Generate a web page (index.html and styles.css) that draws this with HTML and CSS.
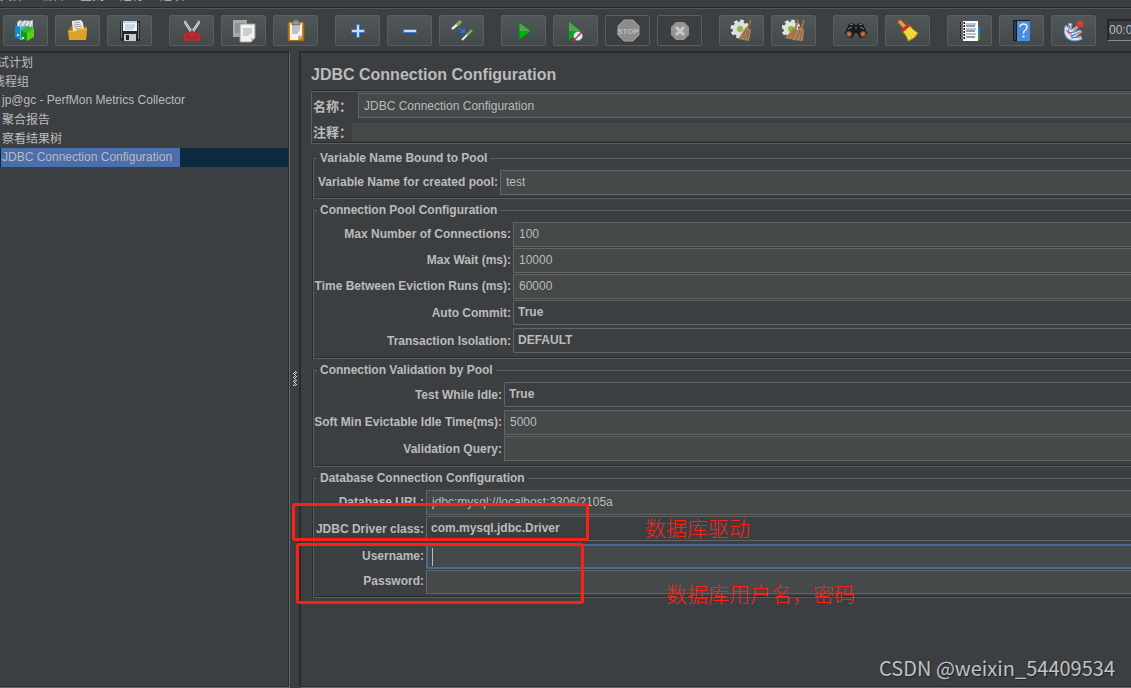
FILE: index.html
```html
<!DOCTYPE html>
<html lang="zh-CN">
<head>
<meta charset="utf-8">
<title>JDBC Connection Configuration</title>
<link rel="stylesheet" href="styles.css">
</head>
<body>
<div class="app">
  <nav class="menubar" aria-label="菜单">
    <span>文件</span><span>编辑</span><span>查找</span><span>运行</span><span>选项</span>
  </nav>

  <div class="toolbar" role="toolbar">
    <div class="group">
      <button class="tool" aria-label="模板"><svg width="24" height="24" viewBox="0 0 24 24"><path d="M3 3l3-2 3 1 3-1 3 1 4-1v9H3z" fill="#b4babd"/><path d="M6 2l-2 5M11 2l-3 5M15 2l-3 5M18 2l-2 5" stroke="#eceeef" stroke-width="1.500"/><path d="M1 6l5 2v13l-5-3z" fill="#1489d0"/><path d="M6 8l6-2v14l-6 1z" fill="#49b9f3"/><circle cx="4" cy="16" r="1" fill="#fff"/><path d="M7 11l6 3v8l-6-3z" fill="#159a1c"/><path d="M13 13l7-4 0 9-7 4z" fill="#54cf16"/><path d="M7 11l6-4 7 2-7 5z" fill="#35b523"/><circle cx="9" cy="19" r="1" fill="#fff"/></svg></button>
      <button class="tool" aria-label="打开"><svg width="24" height="24" viewBox="0 0 24 24"><path d="M3 9l2-2h14l2 1v10H3z" fill="#a96e0c"/><path d="M6 2l9-1 2 3 1 9H7z" fill="#f3f3f3"/><path d="M8 4l6-1M8 6l7-1M8 8l8-1M9 10l7-1" stroke="#989c9f"/><path d="M2 12h8l2-2h9l-1 11H3z" fill="#dca328"/><path d="M2 12h8l2-2h9" stroke="#f0c75c" fill="none"/></svg></button>
      <button class="tool" aria-label="保存"><svg width="24" height="24" viewBox="0 0 24 24"><path d="M2 2h20v20H4l-2-2z" fill="#25282c"/><path d="M3 2h1v17H3zM20 4h1v16h-1z" fill="#777c81"/><path d="M5 2h14v10H5z" fill="#f1f5f8"/><path d="M5 2h14v2H5z" fill="#bed7ea"/><path d="M7 6h10M7 8h10M7 10h8" stroke="#a4bdd1"/><path d="M6 15h12v7H6z" fill="#c9cccf"/><path d="M8 16h3v5H8z" fill="#22252a"/></svg></button>
    </div>
    <div class="group">
      <button class="tool" aria-label="剪切"><svg width="24" height="24" viewBox="0 0 24 24"><path d="M5 1l9 13-2 2L4 4zM19 1l-9 13 2 2 8-12z" fill="#dde0e1"/><path d="M5 3l8 12M19 3l-7 11" stroke="#969a9d"/><ellipse cx="7.500" cy="18" rx="3" ry="3" fill="none" stroke="#d91c20" stroke-width="2.500"/><ellipse cx="16.500" cy="18" rx="3" ry="3" fill="none" stroke="#d91c20" stroke-width="2.500"/><path d="M9 16l3-3 3 3" fill="none" stroke="#d91c20" stroke-width="3"/></svg></button>
      <button class="tool" aria-label="复制"><svg width="24" height="24" viewBox="0 0 24 24"><path d="M1 1h14v17H1z" fill="#a7aaab"/><path d="M3 5h9M3 7h9M3 9h9M3 11h9M3 13h9" stroke="#797d7f"/><path d="M8 5h15v14l-4 4H8z" fill="#f3f3f2" stroke="#999"/><path d="M11 10h9M11 12h9M11 14h9M11 16h6" stroke="#a5a7a8"/><path d="M23 19h-4v4z" fill="#bfc2c3"/></svg></button>
      <button class="tool" aria-label="粘贴"><svg width="24" height="24" viewBox="0 0 24 24"><path d="M4 3h16v19H4z" fill="#c58422" stroke="#8f5912"/><path d="M6 4h12v13l-4 4H6z" fill="#f2f2f1"/><path d="M8 8h8M8 10h8M8 12h7M8 14h6" stroke="#8d9194"/><path d="M18 16l-4 5v-4z" fill="#a9adb0"/><path d="M8 3l2-1V1h4v1l2 1v3H8z" fill="#8f9588" stroke="#64695f"/></svg></button>
    </div>
    <div class="group">
      <button class="tool" aria-label="展开"><svg width="24" height="24" viewBox="0 0 24 24"><path d="M10.500 5.500h3v5h5v3h-5v5h-3v-5h-5v-3h5z" fill="#c4def9" stroke="#3b78cf"/></svg></button>
      <button class="tool" aria-label="折叠"><svg width="24" height="24" viewBox="0 0 24 24"><path d="M5.500 10.500h13v3h-13z" fill="#c4def9" stroke="#3b78cf"/></svg></button>
      <button class="tool" aria-label="切换"><svg width="24" height="24" viewBox="0 0 24 24"><path d="M2 10l7-6" stroke="#e6e8e5" stroke-width="2.500"/><path d="M7 6l4-4" stroke="#7dab58" stroke-width="3.500"/><path d="M12 21l7-7" stroke="#e6e8e5" stroke-width="2"/><path d="M17 16l5-5" stroke="#7dab58" stroke-width="2.500"/><path d="M9 9l5 4" stroke="#2679e5" stroke-width="1.500"/><path d="M15 9v5h-5z" fill="#2679e5"/></svg></button>
    </div>
    <div class="group">
      <button class="tool" aria-label="启动"><svg width="24" height="24" viewBox="0 0 24 24"><path d="M7 3l12 9H7z" fill="#4da74c"/><path d="M7 12h12L7 21z" fill="#00b409"/><path d="M7 3l12 9-12 9z" fill="none" stroke="#187c1b"/></svg></button>
      <button class="tool" aria-label="不停顿启动"><svg width="24" height="24" viewBox="0 0 24 24"><path d="M5 3l12 9-12 9z" fill="#0ca70f"/><path d="M5 3l11 9H5z" fill="#4da74c"/><circle cx="14" cy="17" r="4.500" fill="#edf3f8" stroke="#4b96d2"/><path d="M14 14v3h3" stroke="#a7b8c7" fill="none"/><path d="M9 22l10-10" stroke="#d72c2c" stroke-width="1.500"/></svg></button>
      <button class="tool" aria-label="停止" disabled><svg width="24" height="24" viewBox="0 0 24 24"><path d="M8 1h9l6 6v9l-6 6H8l-6-6V7z" fill="#8c8c8c" stroke="#a2a2a2"/><text x="12" y="15" text-anchor="middle" class="stop">STOP</text></svg></button>
      <button class="tool" aria-label="关闭" disabled><svg width="24" height="24" viewBox="0 0 24 24"><path d="M8 3h8l5 5v8l-5 5H8l-5-5V8z" fill="#949494"/><path d="M8 8l8 8M16 8l-8 8" stroke="#c9c9c9" stroke-width="3"/></svg></button>
    </div>
    <div class="group">
      <button class="tool" aria-label="清除"><svg width="24" height="24" viewBox="0 0 24 24"><circle cx="10" cy="10" r="8" fill="none" stroke="#e2e3e3" stroke-width="3" stroke-dasharray="3.600 2.680"/><circle cx="10" cy="10" r="7.500" fill="#dfe1e1"/><circle cx="10" cy="10" r="3" fill="#7bc52d" stroke="#a9b79b"/><path d="M21 1l-4 10" stroke="#9c6b3a" stroke-width="2"/><path d="M16 8l5 3-2 11-11-2z" fill="#ac8456"/><path d="M16 11l-5 9M18 11l-4 10M19 12l-2 9" stroke="#8a6540"/></svg></button>
      <button class="tool" aria-label="清除全部"><svg width="24" height="24" viewBox="0 0 24 24"><circle cx="9" cy="10" r="8" fill="none" stroke="#e2e3e3" stroke-width="3" stroke-dasharray="3.600 2.680"/><circle cx="9" cy="10" r="7.500" fill="#dfe1e1"/><circle cx="9" cy="10" r="3" fill="#7bc52d"/><path d="M16 1l-3 10M22 1l-3 10" stroke="#a77440" stroke-width="2"/><path d="M12 8l4 3-2 10-11-2zM18 8l4 3-1 11-11-1z" fill="#ad8355"/><path d="M12 11l-5 8M14 11l-4 9M18 11l-4 10M20 12l-2 9" stroke="#8a6540"/></svg></button>
    </div>
    <div class="group">
      <button class="tool" aria-label="搜索"><svg width="24" height="24" viewBox="0 0 24 24"><path d="M5 5l5-1 2 3 2-3 5 1 4 9-2 4-5 1-3-5h-2l-3 5-5-1-2-4z" fill="#18191a"/><path d="M6 6l3-1M15 5l3 1M4 10l4-2M16 8l4 2M11 9h2" stroke="#888b8d"/><circle cx="5" cy="15" r="3" fill="#a55e2d" stroke="#44352b"/><circle cx="19" cy="15" r="3" fill="#a55e2d" stroke="#44352b"/><path d="M4 16l2-2M18 16l2-2" stroke="#ee9c55"/></svg></button>
      <button class="tool" aria-label="重置搜索"><svg width="24" height="24" viewBox="0 0 24 24"><path d="M4 3l6 6" stroke="#9c681f" stroke-width="5" stroke-linecap="round"/><path d="M4 3l6 6" stroke="#dda64a" stroke-width="3" stroke-linecap="round"/><path d="M6 12l7-6q4 5 9 8-3 6-10 8-1-5-6-10z" fill="#e8cf26" stroke="#a58b11"/><path d="M9 12q4 4 5 8M11 10q4 4 6 8M13 9q3 4 7 6" stroke="#ffed79" fill="none"/><path d="M6 12l7-6" stroke="#da2929" stroke-width="3"/></svg></button>
    </div>
    <div class="group">
      <button class="tool" aria-label="函数助手"><svg width="24" height="24" viewBox="0 0 24 24"><path d="M18 8h4v7h-4z" fill="#1685d9"/><path d="M18 14h4v7h-4z" fill="#2c9a31"/><path d="M5 2h15v20H5z" fill="#fbfbfb"/><path d="M8 5h10M8 10h10M8 15h10" stroke="#6590c2"/><path d="M8 7h9M8 12h9M8 18h9" stroke="#313436"/><path d="M2 4h5M2 7h5M2 10h5M2 13h5M2 16h5M2 19h5" stroke="#141617" stroke-width="2"/><path d="M3 4h3M3 7h3M3 10h3M3 13h3M3 16h3M3 19h3" stroke="#e8e8e8"/></svg></button>
      <button class="tool" aria-label="帮助"><svg width="24" height="24" viewBox="0 0 24 24"><path d="M3 1h17v21H3z" fill="#12191f"/><path d="M7 2h13v20H7z" fill="#4a8ddd"/><path d="M4 2h2v19H4z" fill="#323b43"/><path d="M10 8q0-3 3.500-3t3.500 3q0 2-2 3.500-1.500 1-1.500 3" fill="none" stroke="#e7f1fb" stroke-width="1.500"/><path d="M12.500 16.500h2v2h-2z" fill="#e7f1fb"/></svg></button>
      <button class="tool" aria-label="插件管理"><svg width="24" height="24" viewBox="0 0 24 24"><path d="M7 4l3 1-1 6 6-4 1 2-5 5 7-3 2 2-7 5 6-1 1 3q-9 4-15-1Q0 12 4 6l2 3z" fill="#dbe7f7" stroke="#7f9fd8"/><path d="M8 6l-2 8M14 9l-5 6M18 13l-8 4M17 18l-8 1M4 11l7 8" stroke="#3f74cc"/><path d="M8 7v3M13 10l2-1M17 14l2-1M16 18h3" stroke="#f17f23" stroke-width="1.500"/><path d="M6 13l4 1M9 17l3-1" stroke="#cf3a3a"/><circle cx="18" cy="5" r="3.500" fill="#cf4032"/></svg></button>
    </div>
    <output class="timer">00:00:00</output>
  </div>

  <div class="workspace">
    <aside class="tree">
      <ul>
        <li class="root"><span>测试计划</span></li>
        <li class="branch"><span>线程组</span></li>
        <li><span>jp@gc - PerfMon Metrics Collector</span></li>
        <li class="cjk"><span>聚合报告</span></li>
        <li class="cjk"><span>察看结果树</span></li>
        <li class="selected"><span>JDBC Connection Configuration</span></li>
      </ul>
    </aside>
    <div class="divider"><svg width="4" height="15" viewBox="0 0 4 15"><defs><pattern id="grip" width="4" height="4" patternUnits="userSpaceOnUse"><path d="M2 0h1v1h-1zM3 1h1v1h-1zM1 1h1v1h-1zM0 2h1v1h-1zM2 2h1v1h-1zM1 3h1v1h-1z" fill="#cfd1d2"/></pattern></defs><rect width="4" height="15" fill="url(#grip)"/></svg></div>

    <main class="editor">
      <h1>JDBC Connection Configuration</h1>
      <div class="naming">
        <div class="name-row"><label for="name">名称：</label><input id="name" class="field" value="JDBC Connection Configuration"></div>
        <div class="name-row comment"><label for="comment">注释：</label><input id="comment" class="field plain"></div>
      </div>

      <fieldset class="bound">
        <legend>Variable Name Bound to Pool</legend>
        <div class="row"><label for="var">Variable Name for created pool:</label><input id="var" class="field" value="test"></div>
      </fieldset>

      <fieldset class="pool">
        <legend>Connection Pool Configuration</legend>
        <div class="row"><label for="max">Max Number of Connections:</label><input id="max" class="field" value="100"></div>
        <div class="row"><label for="wait">Max Wait (ms):</label><input id="wait" class="field" value="10000"></div>
        <div class="row"><label for="evict">Time Between Eviction Runs (ms):</label><input id="evict" class="field" value="60000"></div>
        <div class="row tall"><label for="commit">Auto Commit:</label><select id="commit" class="field"><option>True</option><option>False</option></select></div>
        <div class="row tall"><label for="iso">Transaction Isolation:</label><select id="iso" class="field"><option>DEFAULT</option></select></div>
      </fieldset>

      <fieldset class="validation">
        <legend>Connection Validation by Pool</legend>
        <div class="row tall"><label for="idle">Test While Idle:</label><select id="idle" class="field"><option>True</option><option>False</option></select></div>
        <div class="row"><label for="soft">Soft Min Evictable Idle Time(ms):</label><input id="soft" class="field" value="5000"></div>
        <div class="row tall"><label for="query">Validation Query:</label><input id="query" class="field"></div>
      </fieldset>

      <fieldset class="database">
        <legend>Database Connection Configuration</legend>
        <div class="row"><label for="url">Database URL:</label><input id="url" class="field" value="jdbc:mysql://localhost:3306/2105a"></div>
        <div class="row tall"><label for="driver">JDBC Driver class:</label><select id="driver" class="field"><option>com.mysql.jdbc.Driver</option></select></div>
        <div class="row"><label for="user">Username:</label><div class="field focused"><i class="caret"></i><input id="user"></div></div>
        <div class="row"><label for="pass">Password:</label><input id="pass" type="password" class="field short"></div>
      </fieldset>
    </main>
  </div>

  <div class="mark mark-driver"></div>
  <div class="mark mark-login"></div>
  <p class="note note-driver">数据库驱动</p>
  <p class="note note-login">数据库用户名，密码</p>
  <p class="watermark">CSDN @weixin_54409534</p>
</div>
</body>
</html>
```
FILE: styles.css
```css
* { box-sizing: border-box; }

body {
  margin: 0;
  background: #3c3f41;
  color: #bbbbbb;
  font: 12px/14px "Liberation Sans", "Noto Sans CJK SC", sans-serif;
}

.app {
  position: relative;
  display: flex;
  flex-direction: column;
  height: 100vh;
  overflow: hidden;
}

/* Menu and toolbar */
.menubar {
  display: flex;
  flex: none;
  align-items: flex-end;
  gap: 16px;
  height: 8px;
  padding-bottom: 4px;
  overflow: hidden;
  border-bottom: 1px solid #28292a;
}

.toolbar {
  display: flex;
  flex: none;
  gap: 17px;
  height: 43px;
  padding: 6px 0 0 3px;
  border-top: 1px solid #585654;
  overflow: hidden;
}

.group { display: flex; flex: none; gap: 7px; }

.tool {
  display: flex;
  align-items: center;
  justify-content: center;
  width: 45px;
  height: 31px;
  padding: 0;
  border: 1px solid #5a5e60;
  border-radius: 2px;
  background: linear-gradient(#515658, #44494b);
}

.tool:disabled { background: none; }

.stop {
  fill: #bdbdbd;
  font: bold 8px "Liberation Sans", sans-serif;
}

.timer {
  flex: none;
  width: 60px;
  height: 22px;
  margin: 4px 0 0 -6px;
  padding: 3px 1px;
  border: 1px solid #26292a;
  border-bottom-color: #8b8d8e;
  box-shadow: inset 1px 1px #26292a;
}

/* Panels */
.workspace { display: flex; flex: 1; min-height: 0; }

.tree {
  width: 290px;
  flex: none;
  overflow: hidden;
  border-top: 2px solid #292b2d;
  border-right: 1px solid #66696a;
  border-bottom: 1px solid #66696a;
  box-shadow: inset -1px -1px #292b2d;
}

.tree ul { margin: 0; padding: 0 1px 0 0; list-style: none; }
.tree li { height: 19px; padding-left: 1px; white-space: nowrap; }
.tree span { display: inline-block; padding: 0 3px 0 1px; line-height: 19px; }
.tree .root span { margin-left: -17px; }
.tree .branch span { margin-left: -9px; }
.tree .root, .tree .branch, .tree .cjk { padding-top: 1px; }
.tree .selected { background: #0d293e; }
.tree .selected span { background: #4b6eaf; min-width: 179px; }

.divider {
  display: flex;
  flex: none;
  align-items: center;
  justify-content: center;
  width: 9px;
  padding-top: 20px;
  padding-bottom: 2px;
}

.editor {
  flex: 1;
  min-width: 0;
  padding: 10px 0 0 10px;
  border: solid #292b2d;
  border-width: 2px 0 0 2px;
  border-bottom: 1px solid #66696a;
  box-shadow: inset 0 -1px #292b2d;
}

h1 { margin: 0; font-size: 16px; line-height: 24px; }

.naming {
  margin-top: 4px;
  border: 1px solid #5a5e60;
  border-right: 0;
  box-shadow: 0 -1px #292b2d, inset 0 -1px #292b2d;
  padding: 1px 0 2px;
}

.name-row { display: grid; grid-template-columns: 46px 1fr; align-items: center; }
.name-row.comment { grid-template-columns: 40px 1fr; margin-top: 5px; }
.name-row label { padding: 2px 0 0 1px; font-size: 13px; font-weight: bold; white-space: nowrap; }

/* Titled groups */
fieldset {
  min-width: 0;
  margin: 4px 0 0 2px;
  padding: 5px 0 2px 4px;
  border: 1px solid #5a5e60;
  border-right: 0;
  box-shadow: -1px 0 #292b2d, inset 0 -1px #292b2d;
}

.bound { margin-top: 7px; }

legend { margin-left: -1px; padding: 0 3px; font-weight: bold; background: #3c3f41; }

.row { display: grid; margin-bottom: 1px; align-items: center; }
.row label { justify-self: end; padding: 0 2px 2px 0; font-weight: bold; white-space: nowrap; }
.row.tall label { padding-bottom: 0; }
.tall { padding-bottom: 2px; }

.bound .row { grid-template-columns: 182px 1fr; }
.pool .row { grid-template-columns: 195px 1fr; }
.validation .row { grid-template-columns: 186px 1fr; }
.database .row { grid-template-columns: 108px 1fr; }

.field {
  width: 100%;
  height: 25px;
  margin: 0;
  padding: 0 5px;
  border: 1px solid #646464;
  border-right: 0;
  border-radius: 0;
  background: #45494a;
  color: #bbbbbb;
  font: inherit;
  outline: 0;
}

.row .field { padding-bottom: 2px; }

select.field {
  appearance: none;
  padding: 0 4px;
  border-radius: 2px 0 0 2px;
  background: #3c3f41;
  font-weight: bold;
}

.field.plain { height: 18px; border: 0; }
.field.short { height: 24px; }

.row .focused {
  display: flex;
  align-items: center;
  padding: 0 4px;
  border: 2px solid #466d94;
  border-right: 0;
  border-radius: 2px 0 0 2px;
}

.focused input {
  flex: 1;
  min-width: 0;
  padding: 0;
  border: 0;
  background: none;
  color: inherit;
  font: inherit;
  outline: 0;
}

.caret { width: 1px; height: 18px; background: #bbbbbb; }

/* Annotations over the window */
.mark { position: absolute; border: 3px solid #ff2015; border-radius: 3px; }
.mark-driver { left: 292px; top: 503px; width: 297px; height: 38px; }
.mark-login { left: 296px; top: 543px; width: 288px; height: 61px; }

.note {
  position: absolute;
  margin: 0;
  color: #ff2015;
  font: 300 21px/24px "Noto Sans CJK SC", sans-serif;
}

.note-driver { left: 645px; top: 515px; }
.note-login { left: 666px; top: 581px; }

.watermark {
  position: absolute;
  right: 16px;
  bottom: 6px;
  margin: 0;
  color: #bfc1c2;
  font: 20px/28px "Noto Sans CJK SC", sans-serif;
  text-shadow: 1px 1px 1px #222425;
}
```
